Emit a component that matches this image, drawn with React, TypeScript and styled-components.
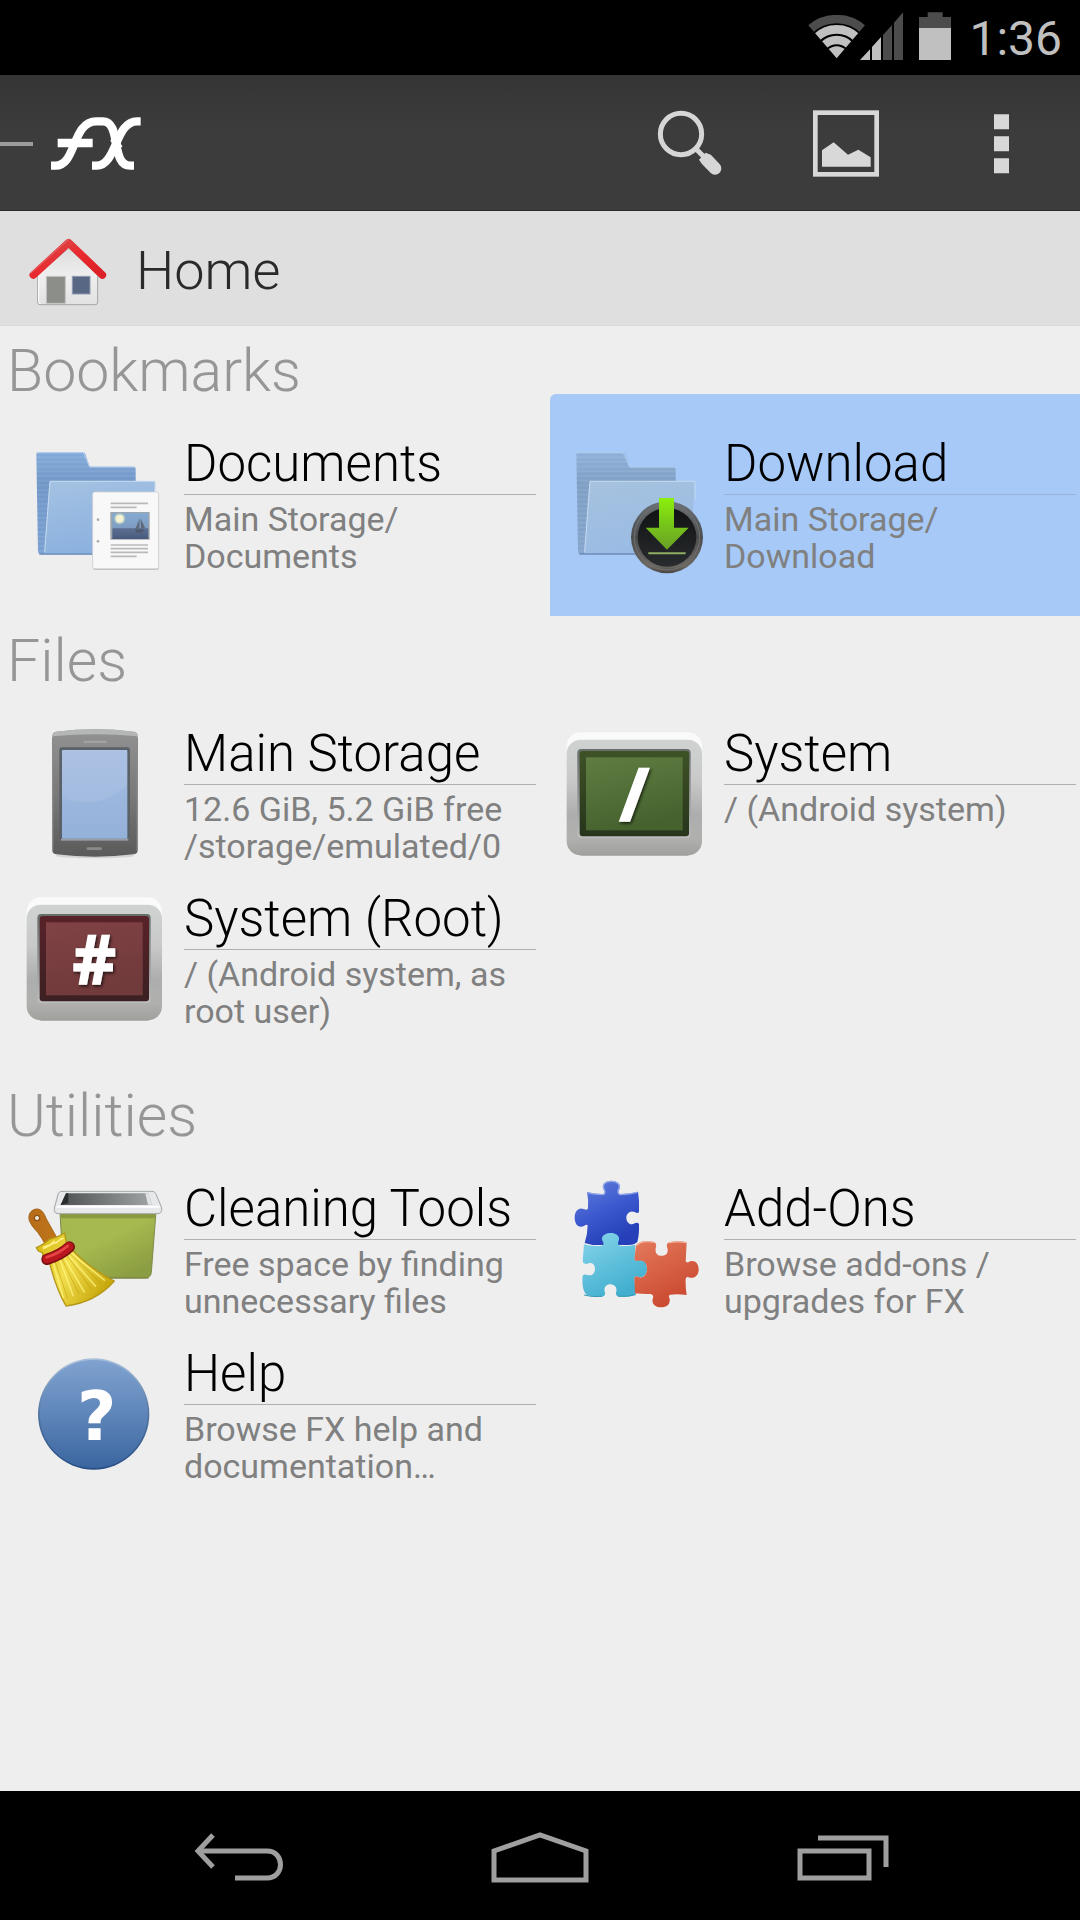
import React from 'react';
import styled, { createGlobalStyle } from 'styled-components';

const GlobalStyle = createGlobalStyle`
  *, *::before, *::after { box-sizing: border-box; }
  body { margin: 0; background: #eeeeee; font-family: Roboto, "Liberation Sans", sans-serif; }
  button { border: 0; padding: 0; margin: 0; background: none; font: inherit; color: inherit; cursor: pointer; }
  svg { display: block; flex: none; }
`;

const Screen = styled.div`
  min-height: 100vh;
  display: flex;
  flex-direction: column;
`;

const StatusBar = styled.header`
  height: 75px;
  padding: 12px 18px 0 0;
  display: flex;
  justify-content: flex-end;
  align-items: flex-start;
  background: #000;
`;

const BatteryBox = styled.span`
  margin: 0 18px 0 15px;
`;

const Clock = styled.time`
  font-size: 48px;
  line-height: 54px;
  color: #c0c0c0;
`;

const AppBar = styled.div`
  height: 136px;
  padding-top: 2px;
  display: flex;
  align-items: center;
  background: linear-gradient(#353535, #3c3c3c 40%);
  border-bottom: 1px solid #2c2c2c;
`;

const UpButton = styled.button`
  display: flex;
  align-items: center;
  gap: 17px;
  margin-right: auto;
`;

const UpDash = styled.span`
  width: 33px;
  height: 4px;
  background: #9c9c9c;
`;

const Action = styled.button`
  width: 156px;
  height: 100%;
  display: flex;
  align-items: center;
  justify-content: center;
`;

const PathBar = styled.button`
  height: 115px;
  padding: 2px 28px 0;
  display: flex;
  align-items: center;
  gap: 28px;
  background: #dfdfdf;
  border-bottom: 1px solid #dadada;
`;

const PathLabel = styled.span`
  font-size: 54px;
  line-height: 64px;
  font-weight: 300;
  color: #2a2a2a;
  padding-top: 4px;
`;

const Content = styled.main`
  flex: 1;
`;

const SectionTitle = styled.h2`
  margin: 0;
  padding: 22px 7px 0;
  font-size: 59px;
  line-height: 46px;
  font-weight: 300;
  color: #969696;
`;

const TileGrid = styled.div`
  display: grid;
  grid-template-columns: 1fr 1fr;
  grid-auto-rows: 165px;
  padding-bottom: 57px;
`;

const Tile = styled.button<{ $selected?: boolean }>`
  min-height: 222px;
  margin-left: 10px;
  padding: 39px 4px 0 12px;
  display: flex;
  align-items: flex-start;
  gap: 18px;
  text-align: left;
  border-radius: 6px 0 0 0;
  background: ${(p) => (p.$selected ? '#a6c9f7' : 'transparent')};
`;

const TileText = styled.span`
  flex: 1;
  display: flex;
  flex-direction: column;
`;

const TileTitle = styled.span<{ $selected?: boolean }>`
  font-size: 51px;
  line-height: 61px;
  font-weight: 300;
  color: #000;
  border-bottom: 1px solid ${(p) => (p.$selected ? '#98b3d6' : '#b0b0b0')};
`;

const TileNote = styled.span`
  padding-top: 6px;
  font-size: 34px;
  line-height: 37px;
  color: #808080;
  white-space: pre-line;
`;

const NavBar = styled.nav`
  height: 129px;
  padding: 4px 90px 0;
  display: flex;
  background: #000;
`;

const NavButton = styled.button`
  flex: 1;
  display: flex;
  align-items: center;
  justify-content: center;
`;

const SignalIcon = () => (
  <svg width="97" height="49" viewBox="621 36 291 147" aria-hidden="true">
    <clipPath id="wedge"><path d="M710 175 L598 44 H822Z" /></clipPath>
    <g clipPath="url(#wedge)" fill="none">
      <circle cx="710" cy="175" r="118" stroke="#4c4c4c" strokeWidth="26" />
      <circle cx="710" cy="175" r="87" stroke="#c0c0c0" strokeWidth="26" />
      <circle cx="710" cy="175" r="55" stroke="#c0c0c0" strokeWidth="25" />
      <circle cx="710" cy="175" r="36" fill="#c0c0c0" />
    </g>
    <path d="M780 180 L810 148 V180Z M816 180 V141 L843 111 V180Z" fill="#c0c0c0" />
    <path d="M849 180 V105 L876 75 V180Z M882 180 V68 L909 37 V180Z" fill="#4c4c4c" />
  </svg>
);

const BatteryIcon = () => (
  <svg width="32" height="49" viewBox="0 0 96 147" aria-hidden="true">
    <path d="M26 1H71V15H96V60H0V15H26Z" fill="#4c4c4c" />
    <path d="M0 48H96V144H0Z" fill="#c0c0c0" />
  </svg>
);

const FxLogo = () => (
  <svg width="92" height="58" viewBox="150 162 276 174" aria-hidden="true">
    <g fill="none" stroke="#fff" strokeWidth="25">
      <path d="M153 314 H166 C230 314 215 181 289 181 H308 C366 181 330 314 391 314 H402" />
      <path d="M276 314 H290 C350 314 345 181 411 181 H422" />
      <path d="M340 232 L358 262" strokeWidth="22" />
      <path d="M173 246 H278" />
    </g>
  </svg>
);

const SearchIcon = () => (
  <svg width="66" height="68" viewBox="171 329 198 204" aria-hidden="true">
    <circle cx="243" cy="401" r="62" fill="none" stroke="#d6d6d6" strokeWidth="15" />
    <path d="M286 444 L310 468" stroke="#d6d6d6" strokeWidth="15" />
    <path d="M321 479 L345 504" stroke="#d6d6d6" strokeWidth="38" strokeLinecap="round" />
    <path d="M297 478 L317 457 L331 463 L306 491Z" fill="#d6d6d6" />
  </svg>
);

const PictureIcon = () => (
  <svg width="66" height="67" viewBox="639 328 198 201" aria-hidden="true">
    <rect x="646" y="336" width="184" height="185" fill="none" stroke="#d8d8d8" strokeWidth="14" />
    <path d="M666 498 V449 L701 425 L744 462 L775 447 L812 470 V498Z" fill="#d8d8d8" />
  </svg>
);

const OverflowIcon = () => (
  <svg width="16" height="60" viewBox="0 0 48 180" fill="#d8d8d8" aria-hidden="true">
    <path d="M0 1H45V46H0Z M0 67H45V112H0Z M0 133H45V178H0Z" />
  </svg>
);

const HouseIcon = () => (
  <svg width="80" height="74" viewBox="84 516 240 222" aria-hidden="true">
    <defs>
      <linearGradient id="wall" x1="0" y1="0" x2="0" y2="1">
        <stop offset="0" stopColor="#dcdcdc" /><stop offset=".5" stopColor="#efefef" /><stop offset="1" stopColor="#e2e2e2" />
      </linearGradient>
      <linearGradient id="roof" x1="0" y1="0" x2="1" y2="1">
        <stop offset="0" stopColor="#d65050" /><stop offset=".5" stopColor="#e92a2f" /><stop offset="1" stopColor="#dc2027" />
      </linearGradient>
    </defs>
    <path d="M206 564 L293 645 V727 Q293 734 286 734 H120 Q113 734 113 727 V645Z" fill="url(#wall)" stroke="#a4a7a2" strokeWidth="3" />
    <path d="M116 648 V725 Q116 731 122 731" fill="none" stroke="#fff" strokeWidth="3" />
    <path d="M100 645 L206 548 L307 645" fill="none" stroke="url(#roof)" strokeWidth="23" strokeLinejoin="round" strokeLinecap="round" />
    <path d="M94 638 L206 538" stroke="#e46b6b" strokeWidth="3" strokeLinecap="round" />
    <rect x="139" y="649" width="57" height="81" fill="#8c8f89" stroke="#c4c6c2" strokeWidth="3" />
    <rect x="217" y="649" width="53" height="53" fill="#586884" stroke="#909ab0" strokeWidth="3" />
  </svg>
);

const ItemSvg = ({ children }: { children: React.ReactNode }) => (
  <svg width="144" height="144" viewBox="0 0 432 432" aria-hidden="true">{children}</svg>
);

const Folder = ({ id, faded }: { id: string; faded?: boolean }) => (
  <>
    <defs>
      <linearGradient id={`${id}b`} x1="0" y1="0" x2="0" y2="1">
        <stop offset="0" stopColor={faded ? '#8fb1da' : '#84abda'} /><stop offset=".3" stopColor={faded ? '#7f9fc4' : '#7097c7'} /><stop offset="1" stopColor={faded ? '#84a5cc' : '#7ba1d2'} />
      </linearGradient>
      <linearGradient id={`${id}f`} x1="0" y1="0" x2=".3" y2="1">
        <stop offset="0" stopColor={faded ? '#a6c2de' : '#a5c2e2'} /><stop offset="1" stopColor={faded ? '#9abbe4' : '#8bb1df'} />
      </linearGradient>
      <pattern id={`${id}s`} width="10" height="14" patternUnits="userSpaceOnUse">
        <path d="M0 3H10" stroke="#fff" strokeWidth="5" opacity=".08" />
      </pattern>
    </defs>
    <path d="M43 64 Q43 58 49 58 H183 Q188 58 190 63 L203 101 H334 Q341 101 341 108 V364 H57 Q49 364 48 355Z" fill={`url(#${id}b)`} />
    <path d="M43 64 Q43 58 49 58 H183 L203 101 H341 V364 H57 Q49 364 48 355Z" fill={`url(#${id}s)`} />
    <path d="M82 150 Q82 144 88 144 H394 Q400 144 400 150 L382 364 H66Z" fill={`url(#${id}f)`} />
    <path d="M44 59 H184 L203 102 H340" fill="none" stroke="#b4cfee" strokeWidth="3" />
    <path d="M68 358 L84 145 H399 V200" fill="none" stroke="#c4d9ef" strokeWidth="3" />
    <path d="M52 363 H300" stroke="#6e8eb8" strokeWidth="4" />
  </>
);

const DocumentsIcon = () => (
  <ItemSvg>
    <Folder id="docs" />
    <defs>
      <linearGradient id="sky" x1="0" y1="0" x2="0" y2="1">
        <stop offset="0" stopColor="#84abd2" /><stop offset=".58" stopColor="#7e9cc2" /><stop offset=".6" stopColor="#5b6f92" /><stop offset="1" stopColor="#485b7c" />
      </linearGradient>
    </defs>
    <rect x="212" y="179" width="199" height="231" rx="6" fill="#b4b4b4" />
    <rect x="212" y="177" width="198" height="230" rx="6" fill="#f8f8f8" stroke="#d0d0d0" strokeWidth="2" />
    <path d="M266 211H378 M266 223H344 M266 336H378 M266 347H378 M266 358H378 M266 370H344" stroke="#b9b9b9" strokeWidth="5" />
    <rect x="265" y="237" width="118" height="83" fill="#9fa5ac" />
    <rect x="271" y="240" width="108" height="78" fill="url(#sky)" />
    <circle cx="293" cy="257" r="17" fill="#c9d8c1" opacity=".6" />
    <circle cx="293" cy="257" r="12" fill="#f3f3d2" />
    <path d="M353 257 L340 288 H352Z M356 256 L369 285 L357 287Z" fill="#5d6878" />
    <path d="M338 290H366L360 298H344Z M352 300L378 315" fill="#4f596b" stroke="#4f596b" strokeWidth="1" />
    <circle cx="228" cy="260" r="4" fill="#aaa" /><circle cx="228" cy="325" r="4" fill="#aaa" />
  </ItemSvg>
);

const DownloadIcon = () => (
  <ItemSvg>
    <Folder id="down" faded />
    <defs>
      <linearGradient id="ring" x1="0" y1="0" x2="0" y2="1">
        <stop offset="0" stopColor="#6b7178" /><stop offset=".5" stopColor="#4b4d4e" /><stop offset=".9" stopColor="#6b6762" /><stop offset="1" stopColor="#474542" />
      </linearGradient>
      <linearGradient id="disc" x1="0" y1="0" x2="0" y2="1">
        <stop offset="0" stopColor="#101214" /><stop offset="1" stopColor="#292c2e" />
      </linearGradient>
      <linearGradient id="arrow" x1="0" y1="0" x2="0" y2="1">
        <stop offset="0" stopColor="#8cf00c" /><stop offset=".5" stopColor="#77c619" /><stop offset="1" stopColor="#6a9f25" />
      </linearGradient>
    </defs>
    <circle cx="315" cy="313" r="108" fill="url(#ring)" />
    <circle cx="315" cy="313" r="98" fill="none" stroke="#73716f" strokeWidth="3" />
    <circle cx="315" cy="313" r="88" fill="url(#disc)" />
    <path d="M291 195 H336 V284 H380 L315 350 L251 284 H291Z" fill="url(#arrow)" />
    <path d="M259 361H371" stroke="#8fae62" strokeWidth="6" />
  </ItemSvg>
);

const PhoneIcon = () => (
  <ItemSvg>
    <defs>
      <linearGradient id="case" x1="0" y1="0" x2="0" y2="1">
        <stop offset="0" stopColor="#929292" /><stop offset=".5" stopColor="#7a7a7a" /><stop offset="1" stopColor="#5a5a5a" />
      </linearGradient>
      <linearGradient id="glass" x1="0" y1="0" x2="0" y2="1">
        <stop offset="0" stopColor="#a5bde2" /><stop offset="1" stopColor="#94b1da" />
      </linearGradient>
    </defs>
    <ellipse cx="219" cy="398" rx="118" ry="8" fill="#d4d4d4" />
    <path d="M91 38 Q91 28 102 26 Q219 12 336 26 Q347 28 347 38 V382 Q347 392 336 394 Q219 408 102 394 Q91 392 91 382Z" fill="url(#case)" />
    <path d="M91 40 Q91 28 102 26 Q219 12 336 26 Q347 28 347 40 Q219 27 91 40Z" fill="#b5b6b6" />
    <path d="M92 44V384 M346 44V384" stroke="#8b8b8b" strokeWidth="4" />
    <rect x="112" y="73" width="212" height="280" rx="7" fill="#5b6169" />
    <rect x="117" y="347" width="202" height="6" fill="#9b9fa5" />
    <rect x="120" y="81" width="196" height="266" rx="3" fill="url(#glass)" />
    <path d="M120 81H316V184Q260 244 180 237Q145 234 120 224Z" fill="#fff" opacity=".08" />
    <rect x="184" y="53" width="71" height="7" rx="3" fill="#a2a2a2" />
    <rect x="194" y="373" width="46" height="8" rx="4" fill="#8a8a8a" />
  </ItemSvg>
);

interface MonitorProps { id: string; glyph: string; size: number; x: number; baseline: number; top: string; bottom: string; edgeTop: string; edgeBottom: string; }

const MonitorIcon = ({ id, glyph, size, x, baseline, top, bottom, edgeTop, edgeBottom }: MonitorProps) => (
  <ItemSvg>
    <defs>
      <linearGradient id={`${id}f`} x1="0" y1="0" x2="0" y2="1">
        <stop offset="0" stopColor="#d0d2d2" /><stop offset=".35" stopColor="#c9c9ca" /><stop offset=".65" stopColor="#adadae" /><stop offset=".85" stopColor="#b0b1ae" /><stop offset="1" stopColor="#a0a19d" />
      </linearGradient>
      <linearGradient id={`${id}e`} x1="0" y1="0" x2="0" y2="1">
        <stop offset="0" stopColor={edgeTop} /><stop offset="1" stopColor={edgeBottom} />
      </linearGradient>
      <linearGradient id={`${id}b`} x1="0" y1="0" x2="0" y2="1">
        <stop offset="0" stopColor="#666e69" /><stop offset=".5" stopColor="#8e9090" /><stop offset="1" stopColor="#bdbdbd" />
      </linearGradient>
      <linearGradient id={`${id}s`} x1="0" y1="0" x2=".3" y2="1">
        <stop offset="0" stopColor={top} /><stop offset="1" stopColor={bottom} />
      </linearGradient>
      <filter id={`${id}d`} x="-30%" y="-30%" width="160%" height="160%">
        <feDropShadow dx="4" dy="5" stdDeviation="5" floodColor="#000" floodOpacity=".7" />
      </filter>
    </defs>
    <rect x="14" y="28" width="406" height="120" rx="42" fill="#fafafa" />
    <rect x="14" y="50" width="406" height="347" rx="42" fill={`url(#${id}f)`} />
    <path d="M55 397H380" stroke="#929391" strokeWidth="2" />
    <rect x="46" y="78" width="340" height="267" rx="12" fill={`url(#${id}b)`} />
    <rect x="53" y="84" width="328" height="256" rx="9" fill={`url(#${id}e)`} />
    <rect x="72" y="103" width="290" height="219" fill={`url(#${id}s)`} />
    <text x={x} y={baseline} textAnchor="middle" fontFamily="'Open Sans', sans-serif" fontWeight="700" fontSize={size} fill="#fff" stroke="#fff" strokeWidth="4" filter={`url(#${id}d)`}>{glyph}</text>
  </ItemSvg>
);

const SystemIcon = () => (
  <MonitorIcon id="sys" glyph="/" size={218} x={217} baseline={294} top="#5f7d42" bottom="#46632f" edgeTop="#3f5226" edgeBottom="#26351c" />
);

const RootIcon = () => (
  <MonitorIcon id="root" glyph="#" size={202} x={217} baseline={288} top="#804245" bottom="#713a3b" edgeTop="#592229" edgeBottom="#3b2022" />
);

const CleaningIcon = () => (
  <ItemSvg>
    <defs>
      <linearGradient id="bin" x1="0" y1="0" x2=".7" y2="1">
        <stop offset="0" stopColor="#a5b850" /><stop offset=".5" stopColor="#a5b94e" /><stop offset="1" stopColor="#8b9d42" />
      </linearGradient>
      <linearGradient id="inside" x1="0" y1="0" x2="1" y2="0">
        <stop offset="0" stopColor="#4d5152" /><stop offset="1" stopColor="#a2a5a6" />
      </linearGradient>
      <linearGradient id="straw" x1="0" y1="0" x2="1" y2=".5">
        <stop offset="0" stopColor="#d3b50b" /><stop offset=".5" stopColor="#f2df4e" /><stop offset="1" stopColor="#c9a90e" />
      </linearGradient>
      <linearGradient id="wood" x1="0" y1="0" x2="1" y2="0">
        <stop offset="0" stopColor="#b56d1b" /><stop offset="1" stopColor="#bf7417" />
      </linearGradient>
    </defs>
    <path d="M114 100 H402 L388 283 Q386 299 371 300 H139 Q125 299 124 284Z" fill="url(#bin)" stroke="#7d8a4a" strokeWidth="3" />
    <path d="M124 300H380" stroke="#77843c" strokeWidth="3" />
    <path d="M116 108H399L398 121H118Z" fill="#6e7b32" opacity=".5" />
    <path d="M109 46 Q112 40 120 40 H390 Q397 40 401 46 L419 89 V98 Q418 106 408 107 H108 Q98 106 97 98 V90Z" fill="#e6e8e9" stroke="#a2a6a7" strokeWidth="3" />
    <path d="M132 46H379L391 81H116Z" fill="url(#inside)" />
    <path d="M132 46L116 81H118L139 75V46Z" fill="#292d2e" />
    <path d="M370 46H379L391 80H378Z" fill="#e0e3e4" />
    <path d="M104 86 H413" stroke="#fff" strokeWidth="6" />
    <path d="M22 128 C16 104 32 93 45 93 C59 93 67 107 73 123 L104 178 L69 198 Q60 180 47 163 Q27 143 22 128Z" fill="url(#wood)" stroke="#a5651d" strokeWidth="3" />
    <circle cx="45" cy="120" r="8" fill="#eee9db" stroke="#915016" strokeWidth="4" />
    <path d="M43 209 Q67 199 82 184 Q107 179 128 165 L134 199 L143 207 Q195 267 277 309 Q221 373 132 384 C115 355 96 306 82 253 L62 237 V225 L49 219Z" fill="url(#straw)" stroke="#b49716" strokeWidth="4" strokeLinejoin="round" />
    <path d="M93 252 L124 359 M113 243 L154 355 M126 238 L188 344 M139 232 L222 326 M147 225 L249 308" stroke="#fff37b" strokeWidth="5" opacity=".75" />
    <path d="M99 249 L137 361 M119 241 L171 348 M135 232 L208 333 M144 226 L237 317" stroke="#b99b09" strokeWidth="3" opacity=".5" />
    <path d="M63 213 L126 180 M62 208L102 194M84 201L98 188M102 196L120 180" stroke="#fff18a" strokeWidth="4" />
    <path d="M75 244 C93 238 123 226 142 207" fill="none" stroke="#791113" strokeWidth="34" strokeLinecap="round" />
    <path d="M75 243 C93 237 123 225 141 206" fill="none" stroke="#ba171f" strokeWidth="26" strokeLinecap="round" />
    <path d="M74 238 C93 232 116 222 137 204" fill="none" stroke="#e64646" strokeWidth="8" strokeLinecap="round" />
  </ItemSvg>
);

const AddOnsIcon = () => (
  <ItemSvg>
    <defs>
      <linearGradient id="blue" x1="0" y1="0" x2=".5" y2="1">
        <stop offset="0" stopColor="#6482dc" /><stop offset=".55" stopColor="#3d59cf" /><stop offset="1" stopColor="#2540b8" />
      </linearGradient>
      <linearGradient id="cyan" x1="0" y1="0" x2=".5" y2="1">
        <stop offset="0" stopColor="#87d5eb" /><stop offset="1" stopColor="#42afcf" />
      </linearGradient>
      <linearGradient id="red" x1="0" y1="0" x2=".5" y2="1">
        <stop offset="0" stopColor="#e4795b" /><stop offset="1" stopColor="#ca4930" />
      </linearGradient>
    </defs>
    <path d="M75 42 Q98 49 123 48 Q130 46 127 38 C114 18 131 8 148 8 C165 8 182 18 170 38 Q167 47 176 48 Q205 48 228 41 Q233 68 231 102 Q227 108 218 102 C203 96 193 108 193 119 C193 132 204 144 218 136 Q228 132 231 139 Q232 171 226 192 Q216 202 196 201 H92 L68 195 Q77 168 77 142 Q74 138 67 143 C50 152 38 139 38 119 C38 99 50 87 65 93 Q76 98 78 91 Q80 65 75 42Z" fill="url(#blue)" />
    <path d="M76 44 Q98 50 123 50 Q132 47 128 37 C117 18 133 10 148 10 C163 10 180 18 168 38 Q167 50 177 50 Q205 49 226 43" fill="none" stroke="#94a8ea" strokeWidth="4" />
    <path d="M66 199 Q91 207 120 203 Q128 200 122 190 C114 173 132 165 147 165 C163 165 177 176 169 191 Q165 201 176 204 Q202 205 220 200 L218 244 Q222 251 231 246 C247 244 255 256 255 272 C255 291 242 302 228 296 Q219 292 217 300 L222 350 Q199 359 168 355 Q158 351 163 341 C166 327 156 319 144 319 C131 319 124 331 129 344 Q132 353 121 356 Q94 358 75 351 Q58 339 62 293 Q66 287 77 291 C91 295 99 285 99 273 C99 257 87 251 74 258 Q64 260 62 250Z" fill="url(#cyan)" />
    <path d="M66 351 Q90 358 120 355 M168 355 Q200 357 220 350" fill="none" stroke="#3597b6" strokeWidth="3" />
    <path d="M222 202 Q239 183 276 192 Q286 196 281 211 C279 226 286 233 298 233 C312 233 320 225 316 210 Q311 197 321 193 Q350 186 374 193 L371 250 Q375 257 386 249 C401 247 410 258 410 274 C410 293 397 302 384 299 Q373 294 371 302 Q370 326 374 351 Q347 347 324 350 Q318 354 323 362 C325 379 315 388 297 388 C279 388 267 376 273 360 Q276 350 266 348 Q246 349 219 346 L217 299 Q222 292 229 297 C243 302 255 291 255 272 C255 254 244 245 230 248 Q221 251 217 244Z" fill="url(#red)" />
    <path d="M222 203 Q240 186 276 193 M321 194 Q350 189 373 194" fill="none" stroke="#f2b39f" strokeWidth="4" />
  </ItemSvg>
);

const HelpIcon = () => (
  <ItemSvg>
    <defs>
      <linearGradient id="ball" x1="0" y1="0" x2="0" y2="1">
        <stop offset="0" stopColor="#7fa2cf" /><stop offset=".5" stopColor="#5f86ba" /><stop offset="1" stopColor="#3a659f" />
      </linearGradient>
      <linearGradient id="rim" x1="0" y1="0" x2="0" y2="1">
        <stop offset="0" stopColor="#a9c0dc" /><stop offset=".5" stopColor="#52749f" /><stop offset="1" stopColor="#284e86" />
      </linearGradient>
    </defs>
    <circle cx="215" cy="213" r="167" fill="url(#rim)" />
    <circle cx="215" cy="213" r="162" fill="url(#ball)" />
    <text x="224" y="291" textAnchor="middle" fontFamily="'DejaVu Sans', sans-serif" fontWeight="700" fontSize="204" fill="#fff">?</text>
  </ItemSvg>
);

const BackIcon = () => (
  <svg width="92" height="54" viewBox="0 0 92 54" fill="none" stroke="#9f9f9f" aria-hidden="true">
    <path d="M5 20 H73 C91 20 91 47 73 47 H41" strokeWidth="5" />
    <path d="M19 4 L4 20 L19 36" strokeWidth="5" />
  </svg>
);

const HomeIcon = () => (
  <svg width="98" height="54" viewBox="0 0 98 54" fill="none" stroke="#9f9f9f" strokeWidth="5" aria-hidden="true">
    <path d="M3 49 V20 L49 4 L95 20 V49Z" />
  </svg>
);

const RecentsIcon = () => (
  <svg width="92" height="54" viewBox="-3 0 92 54" fill="none" stroke="#9f9f9f" strokeWidth="5" overflow="visible" aria-hidden="true">
    <path d="M3 20 H72 V47 H3Z M21 7 H89 V36" />
  </svg>
);

interface Item { title: string; note: string; icon: React.ComponentType; selected?: boolean; }

const sections: { title: string; items: Item[] }[] = [
  {
    title: 'Bookmarks',
    items: [
      { title: 'Documents', note: 'Main Storage/\nDocuments', icon: DocumentsIcon },
      { title: 'Download', note: 'Main Storage/\nDownload', icon: DownloadIcon, selected: true },
    ],
  },
  {
    title: 'Files',
    items: [
      { title: 'Main Storage', note: '12.6 GiB, 5.2 GiB free\n/storage/emulated/0', icon: PhoneIcon },
      { title: 'System', note: '/ (Android system)', icon: SystemIcon },
      { title: 'System (Root)', note: '/ (Android system, as\nroot user)', icon: RootIcon },
    ],
  },
  {
    title: 'Utilities',
    items: [
      { title: 'Cleaning Tools', note: 'Free space by finding\nunnecessary files', icon: CleaningIcon },
      { title: 'Add-Ons', note: 'Browse add-ons /\nupgrades for FX', icon: AddOnsIcon },
      { title: 'Help', note: 'Browse FX help and\ndocumentation…', icon: HelpIcon },
    ],
  },
];

export default function App() {
  return (
    <Screen>
      <GlobalStyle />
      <StatusBar>
        <SignalIcon />
        <BatteryBox><BatteryIcon /></BatteryBox>
        <Clock>1:36</Clock>
      </StatusBar>
      <AppBar>
        <UpButton aria-label="Open navigation"><UpDash /><FxLogo /></UpButton>
        <Action aria-label="Search"><SearchIcon /></Action>
        <Action aria-label="Wallpaper"><PictureIcon /></Action>
        <Action aria-label="More options"><OverflowIcon /></Action>
      </AppBar>
      <PathBar><HouseIcon /><PathLabel>Home</PathLabel></PathBar>
      <Content>
        {sections.map((section) => (
          <section key={section.title}>
            <SectionTitle>{section.title}</SectionTitle>
            <TileGrid>
              {section.items.map(({ title, note, icon: Icon, selected }) => (
                <Tile key={title} $selected={selected}>
                  <Icon />
                  <TileText>
                    <TileTitle $selected={selected}>{title}</TileTitle>
                    <TileNote>{note}</TileNote>
                  </TileText>
                </Tile>
              ))}
            </TileGrid>
          </section>
        ))}
      </Content>
      <NavBar>
        <NavButton aria-label="Back"><BackIcon /></NavButton>
        <NavButton aria-label="Home"><HomeIcon /></NavButton>
        <NavButton aria-label="Recent apps"><RecentsIcon /></NavButton>
      </NavBar>
    </Screen>
  );
}
